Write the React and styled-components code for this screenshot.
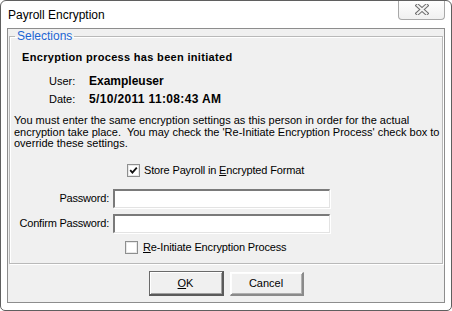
import React from 'react';
import styled, { createGlobalStyle } from 'styled-components';

const Global = createGlobalStyle`
  html, body { margin: 0; padding: 0; background: #fff; }
  body { width: 452px; height: 311px; overflow: hidden; font-family: "Liberation Sans", Arial, sans-serif; color: #000; }
  * { box-sizing: border-box; }
`;

const Window = styled.div`
  width: 452px;
  height: 311px;
  border: 1px solid #5f5f5f;
  border-radius: 6px 6px 5px 5px;
  background: #fff;
  display: flex;
  flex-direction: column;
  overflow: hidden;
`;

const TitleBar = styled.div`
  height: 27px;
  flex: none;
  display: flex;
  align-items: flex-start;
  padding-left: 7px;
`;

const Title = styled.div`
  font-size: 12px;
  line-height: 15px;
  margin-top: 7px;
`;

const CloseButton = styled.div`
  margin-left: auto;
  margin-right: 6px;
  margin-top: -1px;
  width: 47px;
  height: 20px;
  border: 1px solid #a8a8a8;
  border-top: none;
  border-radius: 0 0 4px 4px;
  background: linear-gradient(#fefefe, #f0f0f0);
  display: flex;
  align-items: center;
  justify-content: center;
`;

const Client = styled.div`
  flex: 1;
  margin: 0 6px 7px 6px;
  border: 1px solid #8d8d8d;
  background: #f0f0f0;
  display: flex;
  flex-direction: column;
  padding: 0 1px 4px 1px;
`;

const Group = styled.fieldset`
  margin: 0;
  padding: 8px 4px 9px 4px;
  border: 1px solid #b9b9b9;
  box-shadow: inset 1px 1px 0 #fff, 1px 1px 0 #fff;
  min-width: 0;
  display: flex;
  flex-direction: column;
`;

const Legend = styled.legend`
  margin-left: 1px;
  padding: 0 2px;
  font-size: 12px;
  line-height: 14px;
  color: #1c66d4;
`;

const Heading = styled.div`
  font-size: 11px;
  font-weight: bold;
  line-height: 13px;
  letter-spacing: 0.32px;
  margin-left: 8px;
`;

const InfoGrid = styled.div`
  display: grid;
  grid-template-columns: 40px auto;
  grid-auto-rows: 18px;
  align-items: center;
  margin: 8px 0 0 35px;
`;

const InfoLabel = styled.span`
  font-size: 11px;
`;

const InfoValue = styled.span`
  font-size: 12px;
  font-weight: bold;
  letter-spacing: ${p => p.$spacing || 0}px;
`;

const Paragraph = styled.p`
  margin: 7px 0 0 0;
  font-size: 11px;
  line-height: 11.5px;
  white-space: pre;
`;

const CheckRow = styled.label`
  display: flex;
  align-items: center;
  gap: ${p => p.$gap}px;
  margin-left: ${p => p.$indent}px;
  margin-top: ${p => p.$top}px;
  font-size: 11px;
  line-height: 13px;
  letter-spacing: -0.15px;
`;

const Box = styled.span`
  width: 13px;
  height: 13px;
  flex: none;
  border: 1px solid #8e8f8f;
  background: #fff;
  box-shadow: inset 0 0 0 1px #e8e8e8;
  display: flex;
  align-items: center;
  justify-content: center;
`;

const FieldRow = styled.div`
  display: grid;
  grid-template-columns: 95px 217px;
  column-gap: 4px;
  align-items: center;
  margin-top: ${p => p.$top}px;
`;

const FieldLabel = styled.span`
  font-size: 11px;
  text-align: right;
  letter-spacing: -0.2px;
`;

const Input = styled.div`
  height: 19px;
  background: #fff;
  border-style: solid;
  border-width: 2px 1px 1px 2px;
  border-color: #7a7a7a #e3e3e3 #e3e3e3 #7a7a7a;
  box-shadow: 1px 1px 0 #fff;
`;

const Buttons = styled.div`
  display: flex;
  justify-content: center;
  align-items: flex-start;
  gap: 6px;
  margin-top: 7px;
`;

const Button = styled.div`
  width: ${p => (p.$default ? 75 : 74)}px;
  height: ${p => (p.$default ? 25 : 24)}px;
  margin-top: ${p => (p.$default ? 0 : 1)}px;
  font-size: 11px;
  display: flex;
  align-items: center;
  justify-content: center;
  background: #f0f0f0;
  border-style: solid;
  border-width: 1px 2px 2px 1px;
  border-color: ${p => (p.$default ? '#6a6a6a #5a5a5a #5a5a5a #6a6a6a' : '#ffffff #8a8a8a #8a8a8a #ffffff')};
  box-shadow: ${p => (p.$default ? 'inset 1px 1px 0 #fff, inset -1px -1px 0 #a0a0a0' : 'inset 1px 1px 0 #fdfdfd, inset -1px -1px 0 #b0b0b0')};
`;

const U = styled.span`
  text-decoration: underline;
  text-underline-offset: 1px;
`;

const CloseX = () => (
  <svg width="14" height="11" viewBox="0 0 14 11">
    <path d="M2.5 1.5 L11.5 9.5 M11.5 1.5 L2.5 9.5" stroke="#6e6e6e" strokeWidth="4" strokeLinecap="square" fill="none" />
    <path d="M2.5 1.5 L11.5 9.5 M11.5 1.5 L2.5 9.5" stroke="#f2f2f2" strokeWidth="2" strokeLinecap="square" fill="none" />
  </svg>
);

const Check = () => (
  <svg width="9" height="9" viewBox="0 0 9 9">
    <path d="M1.2 4.2 L3.4 6.6 L7.8 1.6" stroke="#111" strokeWidth="1.8" fill="none" />
  </svg>
);

export default function App() {
  return (
    <>
      <Global />
      <Window>
        <TitleBar>
          <Title>Payroll Encryption</Title>
          <CloseButton><CloseX /></CloseButton>
        </TitleBar>
        <Client>
          <Group>
            <Legend>Selections</Legend>
            <Heading>Encryption process has been initiated</Heading>
            <InfoGrid>
              <InfoLabel>User:</InfoLabel>
              <InfoValue>Exampleuser</InfoValue>
              <InfoLabel>Date:</InfoLabel>
              <InfoValue $spacing={0.35}>5/10/2011 11:08:43 AM</InfoValue>
            </InfoGrid>
            <Paragraph>{"You must enter the same encryption settings as this person in order for the actual\nencryption take place.  You may check the 'Re-Initiate Encryption Process' check box to\noverride these settings."}</Paragraph>
            <CheckRow $indent={113} $gap={4} $top={14}>
              <Box><Check /></Box>
              <span>Store Payroll in <U>E</U>ncrypted Format</span>
            </CheckRow>
            <FieldRow $top={12}>
              <FieldLabel>Password:</FieldLabel>
              <Input />
            </FieldRow>
            <FieldRow $top={6}>
              <FieldLabel>Confirm Password:</FieldLabel>
              <Input />
            </FieldRow>
            <CheckRow $indent={111} $gap={5} $top={8}>
              <Box />
              <span><U>R</U>e-Initiate Encryption Process</span>
            </CheckRow>
          </Group>
          <Buttons>
            <Button $default><span><U>O</U>K</span></Button>
            <Button>Cancel</Button>
          </Buttons>
        </Client>
      </Window>
    </>
  );
}
